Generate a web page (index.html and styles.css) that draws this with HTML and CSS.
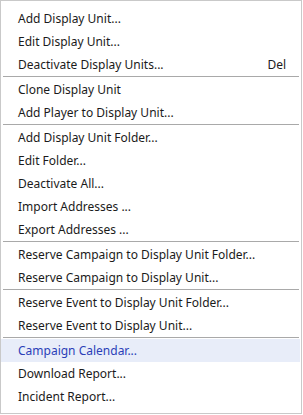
FILE: index.html
```html
<!DOCTYPE html>
<html lang="en">
<head>
    <meta charset="UTF-8">
    <meta name="viewport" content="width=device-width, initial-scale=1.0">
    <title>Display Unit Menu</title>
    <link rel="stylesheet" href="styles.css">
</head>
<body>
    <ul class="menu">
        <li class="menu-item">Add Display Unit...</li>
        <li class="menu-item">Edit Display Unit...</li>
        <li class="menu-item">Deactivate Display Units... <span class="shortcut">Del</span></li>
        <li class="separator"></li>
        <li class="menu-item">Clone Display Unit</li>
        <li class="menu-item">Add Player to Display Unit...</li>
        <li class="separator"></li>
        <li class="menu-item">Add Display Unit Folder...</li>
        <li class="menu-item">Edit Folder...</li>
        <li class="menu-item">Deactivate All...</li>
        <li class="menu-item">Import Addresses ...</li>
        <li class="menu-item">Export Addresses ...</li>
        <li class="separator"></li>
        <li class="menu-item">Reserve Campaign to Display Unit Folder...</li>
        <li class="menu-item">Reserve Campaign to Display Unit...</li>
        <li class="separator"></li>
        <li class="menu-item">Reserve Event to Display Unit Folder...</li>
        <li class="menu-item">Reserve Event to Display Unit...</li>
        <li class="separator"></li>
        <li class="menu-item active">Campaign Calendar...</li>
        <li class="menu-item">Download Report...</li>
        <li class="menu-item">Incident Report...</li>
    </ul>
</body>
</html>
```

FILE: styles.css
```css
body {
    margin: 0;
    padding: 0;
    background-color: #fff;
    font-family: 'Noto Sans', 'Open Sans', sans-serif;
}

.menu {
    list-style: none;
    margin: 0;
    padding: 6px 0 5px;
    width: 300px;
    border: 1px solid #c9c9c9;
    background: #fff;
}

.menu-item {
    display: flex;
    align-items: center;
    height: 23px;
    padding: 0 15px 0 17px;
    font-size: 12px;
    color: #1b1b1b;
    white-space: nowrap;
    cursor: default;
}

.menu-item.active {
    background-color: #e8edf9;
    color: #2b3fb8;
    margin-right: 1px;
}

.shortcut {
    margin-left: auto;
}

.separator {
    height: 1px;
    margin: 0 2px 1px 2px;
    background-color: #a9a9a9;
}
```
